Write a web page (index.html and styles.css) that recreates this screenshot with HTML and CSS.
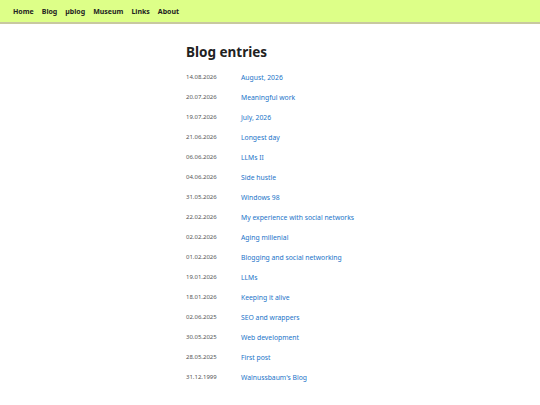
FILE: index.html
```html
<!DOCTYPE html>
<html>
  <head>
    <title>Blog</title>
    <link rel="stylesheet" href="styles.css">
  </head>
  <body>
    <nav class="topbar">
      <a href="#">Home</a>
      <a href="#">Blog</a>
      <a href="#">µblog</a>
      <a href="#">Museum</a>
      <a href="#">Links</a>
      <a href="#">About</a>
    </nav>
    <main class="content">
      <h1>Blog entries</h1>
      <ul class="entries">
        <li><span class="date">14.08.2026</span><a href="#">August, 2026</a></li>
        <li><span class="date">20.07.2026</span><a href="#">Meaningful work</a></li>
        <li><span class="date">19.07.2026</span><a href="#">July, 2026</a></li>
        <li><span class="date">21.06.2026</span><a href="#">Longest day</a></li>
        <li><span class="date">06.06.2026</span><a href="#">LLMs II</a></li>
        <li><span class="date">04.06.2026</span><a href="#">Side hustle</a></li>
        <li><span class="date">31.05.2026</span><a href="#">Windows 98</a></li>
        <li><span class="date">22.02.2026</span><a href="#">My experience with social networks</a></li>
        <li><span class="date">02.02.2026</span><a href="#">Aging millenial</a></li>
        <li><span class="date">01.02.2026</span><a href="#">Blogging and social networking</a></li>
        <li><span class="date">19.01.2026</span><a href="#">LLMs</a></li>
        <li><span class="date">18.01.2026</span><a href="#">Keeping it alive</a></li>
        <li><span class="date">02.06.2025</span><a href="#">SEO and wrappers</a></li>
        <li><span class="date">30.05.2025</span><a href="#">Web development</a></li>
        <li><span class="date">28.05.2025</span><a href="#">First post</a></li>
        <li><span class="date">31.12.1999</span><a href="#">Walnussbaum's Blog</a></li>
      </ul>
    </main>
  </body>
</html>
```

FILE: styles.css
```css
body {
  margin: 0;
  font-family: "Noto Sans", sans-serif;
  background: #fff;
  color: #222;
}
.topbar {
  display: flex;
  gap: 8px;
  align-items: center;
  height: 22px;
  padding: 0 13px;
  background: #ddff88;
  border-bottom: 2px solid #c8c8a0;
}
.topbar a {
  color: #222;
  text-decoration: none;
  font-weight: bold;
  font-size: 7px;
}
.content {
  width: 168px;
  margin: 0 auto;
  padding-top: 18px;
}
h1 {
  font-size: 13.5px;
  margin: 0 0 5px;
  line-height: 20px;
}
.entries {
  list-style: none;
  margin: 0;
  padding: 0;
}
.entries li {
  display: flex;
  align-items: center;
  height: 20px;
}
.date {
  width: 55px;
  flex-shrink: 0;
  font-size: 6px;
  color: #555;
}
.entries a {
  color: #1a73c8;
  text-decoration: none;
  font-size: 6.8px;
  white-space: nowrap;
}
```
